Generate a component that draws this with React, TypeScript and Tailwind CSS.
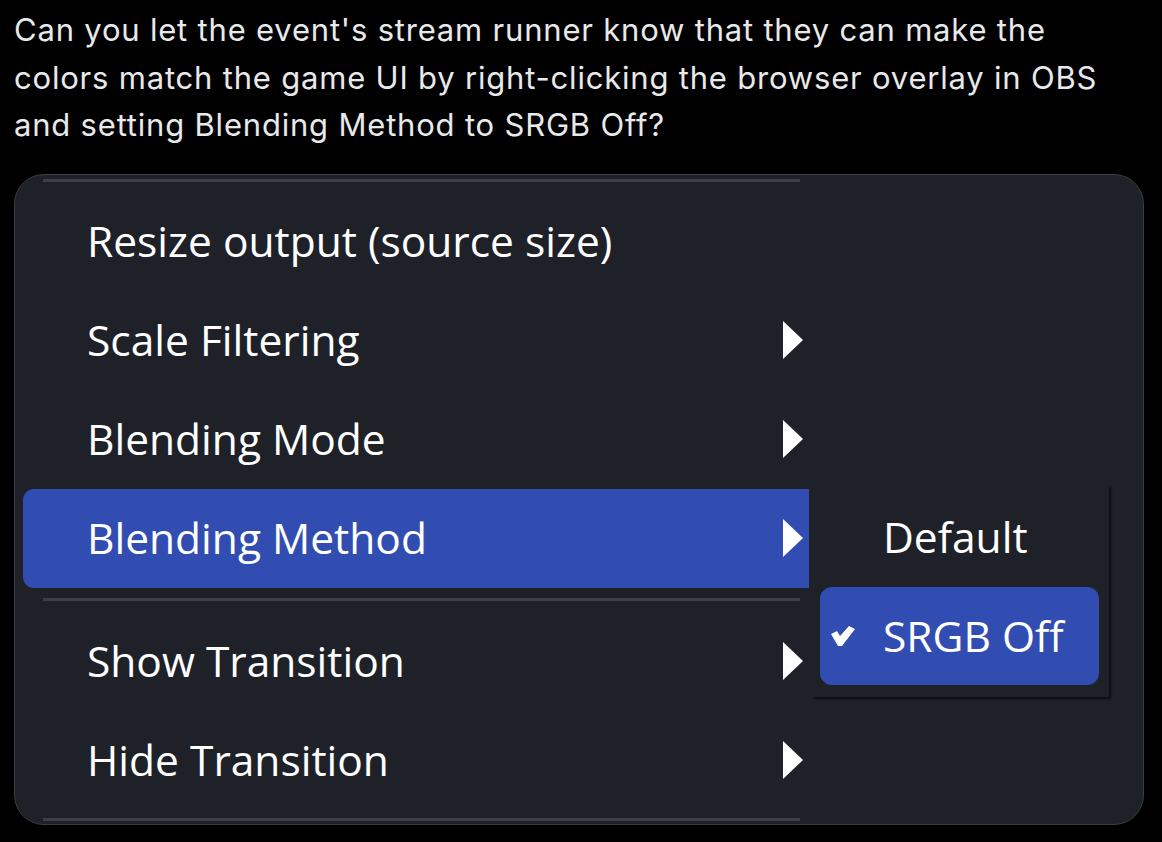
import React from "react";

const Arrow = () => (
  <svg width="20" height="38" viewBox="0 0 20 38" className="shrink-0">
    <polygon points="0,0 20,19 0,38" fill="#ffffff" />
  </svg>
);

const Check = () => (
  <svg width="24" height="22" viewBox="0 0 24 22" className="shrink-0">
    <polygon points="0,9 6,6 9,11 18,1 24,4 11,21 7,21" fill="#ffffff" />
  </svg>
);

const Sep = () => <div className="ml-[20px] w-[757px] h-[3px] bg-[#3d3f48]" />;

const Item = ({ label, arrow = true, active = false }: { label: string; arrow?: boolean; active?: boolean }) => (
  <div
    className={`h-[99px] flex items-center pl-[64px] pr-[6px] ${active ? "bg-[#324db2] rounded-l-[11px]" : ""}`}
  >
    <span className="flex-1 text-white text-[42.5px]">{label}</span>
    {arrow && <Arrow />}
  </div>
);

export default function App() {
  return (
    <div className="w-[1162px] h-[842px] bg-black overflow-hidden" style={{ fontFamily: "'Open Sans', sans-serif" }}>
      <div
        className="px-[14px] pt-[6px] text-[#e7e9ea] text-[31px] leading-[47.5px] tracking-[0.8px] whitespace-nowrap"
        style={{ fontFamily: "Inter, 'Noto Sans', sans-serif" }}
      >
        Can you let the event's stream runner know that they can make the
        <br />
        colors match the game UI by right-clicking the browser overlay in OBS
        <br />
        and setting Blending Method to SRGB Off?
      </div>
      <div className="relative ml-[14px] mt-[25px] w-[1130px] h-[651px] rounded-[30px] border border-[#3a3c42] bg-[#1f2129]">
        <div className="ml-[8px] w-[786px] pt-[4px] flex flex-col">
          <Sep />
          <div className="h-[10px]" />
          <Item label="Resize output (source size)" arrow={false} />
          <Item label="Scale Filtering" />
          <Item label="Blending Mode" />
          <Item label="Blending Method" active />
          <div className="h-[10px]" />
          <Sep />
          <div className="h-[11px]" />
          <Item label="Show Transition" />
          <Item label="Hide Transition" />
          <div className="h-[8px]" />
          <Sep />
        </div>
        <div className="absolute left-[797px] top-[310px] w-[297px] h-[212px] bg-[#1f2129] shadow-[2px_2px_2px_rgba(0,0,0,0.6)] pt-[3px] pl-[8px] pr-[10px] flex flex-col">
          <div className="h-[99px] flex items-center pl-[63px] text-white text-[42.5px]">Default</div>
          <div className="h-[98px] flex items-center pl-[11px] bg-[#324db2] rounded-[12px] text-white text-[42.5px]">
            <Check />
            <span className="ml-[28px]">SRGB Off</span>
          </div>
        </div>
      </div>
    </div>
  );
}
